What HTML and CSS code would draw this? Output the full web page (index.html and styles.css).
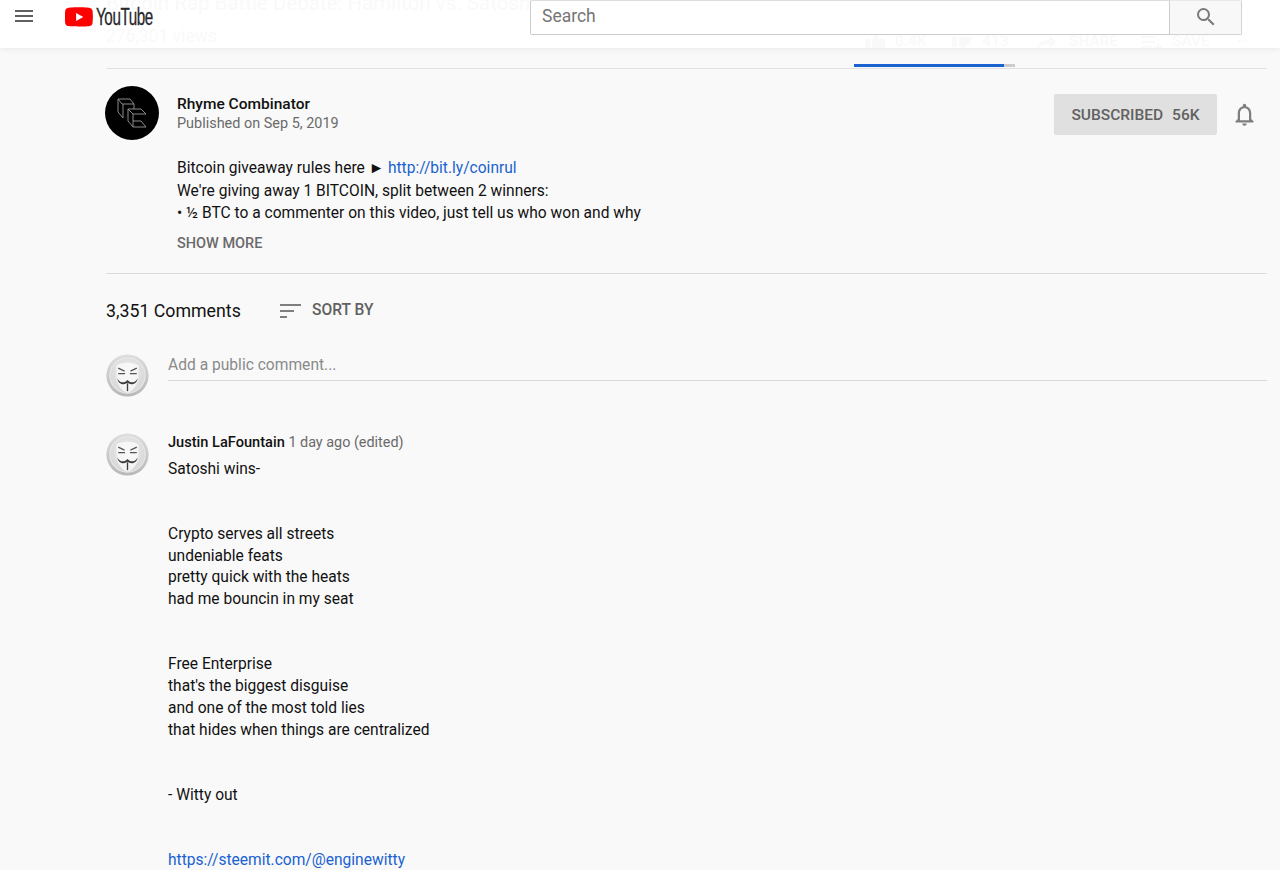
FILE: index.html
```html
<!DOCTYPE html>
<html lang="en">
<head>
<meta charset="utf-8">
<title>Rhyme Combinator</title>
<link rel="stylesheet" href="styles.css">
</head>
<body>
<svg class="defs" width="0" height="0" aria-hidden="true">
  <defs>
    <radialGradient id="coin" cx="50%" cy="40%" r="60%"><stop offset="0" stop-color="#efefef"/><stop offset="1" stop-color="#d6d6d6"/></radialGradient>
    <linearGradient id="rim" x1="0" y1="0" x2="0" y2="1"><stop offset="0" stop-color="#dedede"/><stop offset="1" stop-color="#b8b8b8"/></linearGradient>
    <symbol id="mask" viewBox="0 0 44 44">
      <circle cx="22" cy="22" r="21.600" fill="url(#rim)"/>
      <circle cx="22" cy="22" r="18" fill="url(#coin)" stroke="#e8e8e8" stroke-width="1.200"/>
      <path d="M10.500 12C14 8 30 8 33.500 12L33 27C31 34 25 39.500 22 39.500C19 39.500 13 34 11 27Z" fill="#fdfdfd" opacity=".7"/>
      <path d="M12.500 14.500L19 17.500M12.500 20H19.500M31.500 14.500L25 17.500M31.500 20H24.500" stroke="#555" stroke-width="1.300" fill="none"/>
      <path d="M11.500 25C14.500 30 19 30 22 26.500C25 30 29.500 30 32.500 25C31 31.500 25.500 32 22 29.500C18.500 32 13 31.500 11.500 25Z" fill="#3c3c3c"/>
      <path d="M22 30V38" stroke="#3c3c3c" stroke-width="1.400"/>
    </symbol>
  </defs>
</svg>

<header class="topbar">
  <div class="ghost">
    <div class="ghost-title">Bitcoin Rap Battle Debate: Hamilton vs. Satoshi</div>
    <div class="ghost-views">276,301 views</div>
    <div class="ghost-actions">
      <svg width="20" height="18" viewBox="0 0 20 18"><path d="M0 6h5v12H0zM7 6l5-6 2 2-1 4h7v12H7z"/></svg><span class="a1">0.4K</span>
      <svg width="20" height="18" viewBox="0 0 20 18"><path d="M0 4h5v10H0zM7 4h13l-2 8h-5l-1 6-5-6z"/></svg><span class="a2">413</span>
      <svg width="20" height="18" viewBox="0 0 20 18"><path d="M12 3l8 6-8 6v-4C7 11 3 12 0 16 1 10 5 7 12 7z"/></svg><span class="a3">SHARE</span>
      <svg width="20" height="18" viewBox="0 0 20 18"><path d="M0 3h13v2H0zM0 8h13v2H0zM0 13h9v2H0zM15 10h2v3h3v2h-3v3h-2v-3h-3v-2h3z"/></svg><span class="a4">SAVE</span>
      <span class="a5">···</span>
    </div>
  </div>
  <button class="menu-btn" aria-label="Menu">
    <svg width="24" height="24" viewBox="0 0 24 24"><path d="M3 18h18v-2H3v2zm0-5h18v-2H3v2zm0-7v2h18V6H3z" fill="#606060"/></svg>
  </button>
  <a class="logo">
    <svg class="logo-mark" width="28" height="20" viewBox="0 0 29 20"><path d="M28.400 3.100A3.600 3.600 0 0 0 25.800.600C23.500 0 14.300 0 14.300 0S5.100 0 2.800.600A3.600 3.600 0 0 0 .300 3.100C-.100 5.400-.100 10-.100 10s0 4.600.400 6.900a3.600 3.600 0 0 0 2.500 2.500c2.300.600 11.500.600 11.500.600s9.200 0 11.500-.600a3.600 3.600 0 0 0 2.600-2.500c.500-2.300.500-6.900.500-6.900s0-4.600-.500-6.900z" fill="#f00"/><path d="M11.500 14.200L19 10l-7.500-4.200z" fill="#fff"/></svg>
    <span class="logo-text">YouTube</span>
  </a>
  <form class="search">
    <div class="search-input">Search</div>
    <div class="search-btn">
      <svg width="24" height="24" viewBox="0 0 24 24"><path d="M15.500 14h-.79l-.28-.27A6.470 6.470 0 0 0 16 9.500 6.500 6.500 0 1 0 9.500 16c1.610 0 3.090-.59 4.230-1.570l.27.28v.79l5 4.990L20.490 19l-4.990-5zm-6 0C7.010 14 5 11.990 5 9.500S7.010 5 9.500 5 14 7.010 14 9.500 11.990 14 9.500 14z" fill="#7a7a7a"/></svg>
    </div>
  </form>
</header>

<main class="content">
  <div class="meta-rule">
    <div class="sentiment"><div class="sentiment-like"></div></div>
  </div>

  <section class="owner">
    <svg class="owner-avatar" width="54" height="54" viewBox="0 0 54 54">
      <circle cx="27" cy="27" r="27" fill="#000"/>
      <g fill="none" stroke="#9a9a9a" stroke-width=".9">
        <path d="M13 13H25L29 18H17ZM13 13V26L18 32V18M29 18V23"/>
        <path d="M23 23H36L41 28H28ZM23 23V35L28 41H41L36 35H28M28 28V41"/>
      </g>
    </svg>
    <div class="owner-text">
      <div class="owner-name">Rhyme Combinator</div>
      <div class="owner-date">Published on Sep 5, 2019</div>
    </div>
    <div class="subscribe">
      <button class="subscribed"><span>SUBSCRIBED</span><span>56K</span></button>
      <svg class="bell" width="27" height="27" viewBox="0 0 24 24"><path d="M12 22a2 2 0 0 0 2-2h-4a2 2 0 0 0 2 2zm6-6v-5c0-3.070-1.630-5.640-4.500-6.320V4a1.500 1.500 0 0 0-3 0v.68C7.640 5.360 6 7.920 6 11v5l-2 2v1h16v-1l-2-2zm-2 1H8v-6c0-2.480 1.510-4.500 4-4.500s4 2.020 4 4.500v6z" fill="#7f7f7f"/></svg>
    </div>
  </section>

  <section class="description">
    <p>Bitcoin giveaway rules here ► <a>http://bit.ly/coinrul</a></p>
    <p>We're giving away 1 BITCOIN, split between 2 winners:</p>
    <p>• ½ BTC to a commenter on this video, just tell us who won and why</p>
    <div class="show-more">SHOW MORE</div>
  </section>

  <section class="comments">
    <div class="comments-head">
      <h2>3,351 Comments</h2>
      <div class="sort">
        <svg width="21" height="15" viewBox="0 0 21 15"><path d="M0 0h21v2H0zM0 6h14v2H0zM0 12h7v2H0z" fill="#7f7f7f"/></svg>
        <span>SORT BY</span>
      </div>
    </div>
    <div class="add-comment">
      <svg class="avatar" viewBox="0 0 44 44"><use href="#mask"/></svg>
      <div class="add-input">Add a public comment...</div>
    </div>
    <article class="comment">
      <svg class="avatar" viewBox="0 0 44 44"><use href="#mask"/></svg>
      <div class="comment-main">
        <div class="comment-head"><strong>Justin LaFountain</strong> <span>1 day ago (edited)</span></div>
        <div class="comment-body">Satoshi wins-


Crypto serves all streets
undeniable feats
pretty quick with the heats
had me bouncin in my seat


Free Enterprise
that's the biggest disguise
and one of the most told lies
that hides when things are centralized


- Witty out


<a>https://steemit.com/@enginewitty</a></div>
      </div>
    </article>
  </section>
</main>
</body>
</html>
```
FILE: styles.css
```css
* { box-sizing: border-box; }
html, body { margin: 0; height: 870px; overflow: hidden; }
body {
  background: #f9f9f9;
  color: #111;
  font-family: Roboto, "Noto Sans", Arial, sans-serif;
  font-size: 15.570px;
  line-height: 21.750px;
}
a { color: #1a62d0; text-decoration: none; }
button { font: inherit; border: 0; padding: 0; background: none; }
p { margin: 0; }
.defs { position: absolute; }

.topbar {
  position: relative;
  height: 48px;
  background: #fff;
  box-shadow: 0 1px 6px rgba(0,0,0,.07);
  display: flex;
  align-items: flex-start;
  overflow: hidden;
}
.ghost { position: absolute; inset: 0; color: #000; fill: #000; opacity: .018; pointer-events: none; }
.ghost-title { position: absolute; left: 106px; top: -12px; font-size: 20.500px; line-height: 30px; white-space: nowrap; }
.ghost-views { position: absolute; left: 106px; top: 26px; font-size: 17.500px; }
.ghost-actions { position: absolute; left: 865px; top: 31px; display: flex; align-items: center; font-size: 15.500px; font-weight: 500; }
.a1 { margin-left: 10px; width: 57px; }
.a2 { margin-left: 10px; width: 55px; }
.a3 { margin-left: 12px; width: 73px; }
.a4 { margin-left: 10px; width: 65px; }
.menu-btn { margin: 4px 0 0 12px; width: 24px; height: 24px; display: block; }
.logo { display: flex; align-items: center; margin: 7px 0 0 29px; height: 20px; position: relative; }
.logo-mark { flex: none; }
.logo-text {
  font-family: "Liberation Sans", sans-serif;
  font-size: 23px;
  line-height: 20px;
  letter-spacing: -.6px;
  color: #282828;
  margin-left: 3px;
  -webkit-text-stroke: .3px #282828;
  display: inline-block;
  transform: scaleX(.66);
  transform-origin: left center;
}
.search { position: absolute; left: 530px; top: 0; width: 712px; height: 35px; display: flex; }
.search-input {
  flex: 1;
  background: #fff;
  border: 1px solid #ccc;
  border-top-color: #ddd;
  border-radius: 2px 0 0 2px;
  padding-left: 11px;
  font-size: 17.500px;
  line-height: 31px;
  color: #757575;
}
.search-btn {
  width: 72px;
  background: #f8f8f8;
  border: 1px solid #d3d3d3;
  border-left: 0;
  border-top-color: #e8e8e8;
  border-radius: 0 2px 2px 0;
  display: flex;
  align-items: center;
  justify-content: center;
  padding-bottom: 2px;
}

.content { margin: 0 13px 0 106px; }
.meta-rule { height: 21px; border-bottom: 1px solid #e0e0e0; position: relative; }
.sentiment { position: absolute; left: 748px; bottom: 1px; width: 161px; height: 3px; background: #ccc; }
.sentiment-like { width: 150px; height: 3px; background: #1a62d0; }

.owner { display: flex; align-items: flex-start; padding-top: 17px; height: 87px; margin-left: -1px; }
.owner-avatar { flex: none; }
.owner-text { margin: 8px 0 0 18px; flex: 1; line-height: 20px; }
.owner-name { font-size: 15.500px; font-weight: 500; color: #111; }
.owner-date { font-size: 14.450px; color: #6a6a6a; }
.subscribe { display: flex; align-items: center; margin: 8px 9px 0 0; }
.subscribed {
  width: 163px;
  height: 41px;
  background: #e0e0e0;
  border-radius: 2px;
  color: #616161;
  font-size: 15.500px;
  font-weight: 500;
  display: flex;
  justify-content: center;
  align-items: center;
  gap: 9px;
  padding: 2px 0 0 0;
}
.bell { margin-left: 14px; }

.description { margin-left: 71px; height: 117px; padding-top: 1px; line-height: 22.500px; }
.show-more { margin-top: 8px; color: #6a6a6a; font-weight: 500; font-size: 14.500px; }

.comments { border-top: 1px solid #dcdcdc; }
.comments-head { display: flex; align-items: center; height: 52px; padding-top: 22px; }
.comments-head h2 { margin: 0; font-size: 17.750px; font-weight: 400; color: #111; width: 174px; position: relative; top: 1px; }
.sort { display: flex; align-items: center; gap: 11px; color: #616161; font-weight: 500; font-size: 15.600px; }
.avatar { display: block; width: 43px; height: 43px; flex: none; }
.add-comment { display: flex; margin-top: 28px; }
.add-input { flex: 1; margin: 1px 0 0 19px; height: 26px; border-bottom: 1px solid #d8d8d8; color: #8a8a8a; line-height: 20px; font-size: 15.600px; }
.comment { display: flex; margin-top: 36px; }
.comment-main { margin-left: 19px; }
.comment-head { line-height: 20px; margin-top: -1px; font-size: 14.400px; }
.comment-head strong { font-weight: 500; font-size: 14.600px; color: #111; }
.comment-head span { color: #6a6a6a; }
.comment-body { white-space: pre-line; margin-top: 5.500px; }
```
